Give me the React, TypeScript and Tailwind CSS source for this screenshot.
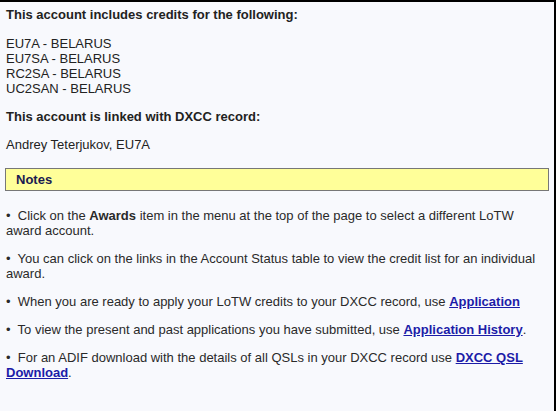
import React from "react";

const Link = ({ children }: { children: React.ReactNode }) => (
  <a href="#" className="font-bold text-[#1c1ca8] underline">
    {children}
  </a>
);

export default function App() {
  return (
    <div
      className="h-[411px] w-[556px] overflow-hidden border-t-2 border-r-2 border-black bg-[#f8f9fd] text-[13px] leading-[15px] text-[#222]"
      style={{ fontFamily: '"Liberation Sans", Arial, sans-serif' }}
    >
      <div className="pl-[6px] pr-[6px] pt-[5px]">
        <p className="font-bold">This account includes credits for the following:</p>
        <p className="mt-[14px]">
          EU7A - BELARUS
          <br />
          EU7SA - BELARUS
          <br />
          RC2SA - BELARUS
          <br />
          UC2SAN - BELARUS
        </p>
        <p className="mt-[13px] font-bold">This account is linked with DXCC record:</p>
        <p className="mt-[13px]">Andrey Teterjukov, EU7A</p>
      </div>
      <div className="ml-[5px] mr-[5px] mt-[16px] border border-[#777] bg-[#ffff99] px-[10px] py-[3px] font-bold text-[#1a1a50]">
        Notes
      </div>
      <div className="pl-[6px] pr-[8px] pt-[17px] text-[#2a2a2a]">
        <p>
          •&nbsp; Click on the <b>Awards</b> item in the menu at the top of the page to select a different LoTW award account.
        </p>
        <p className="mt-[13px]">
          •&nbsp; You can click on the links in the Account Status table to view the credit list for an individual award.
        </p>
        <p className="mt-[13px]">
          •&nbsp; When you are ready to apply your LoTW credits to your DXCC record, use <Link>Application</Link>
        </p>
        <p className="mt-[13px]">
          •&nbsp; To view the present and past applications you have submitted, use <Link>Application History</Link>.
        </p>
        <p className="mt-[13px]">
          •&nbsp; For an ADIF download with the details of all QSLs in your DXCC record use <Link>DXCC QSL Download</Link>.
        </p>
      </div>
    </div>
  );
}
